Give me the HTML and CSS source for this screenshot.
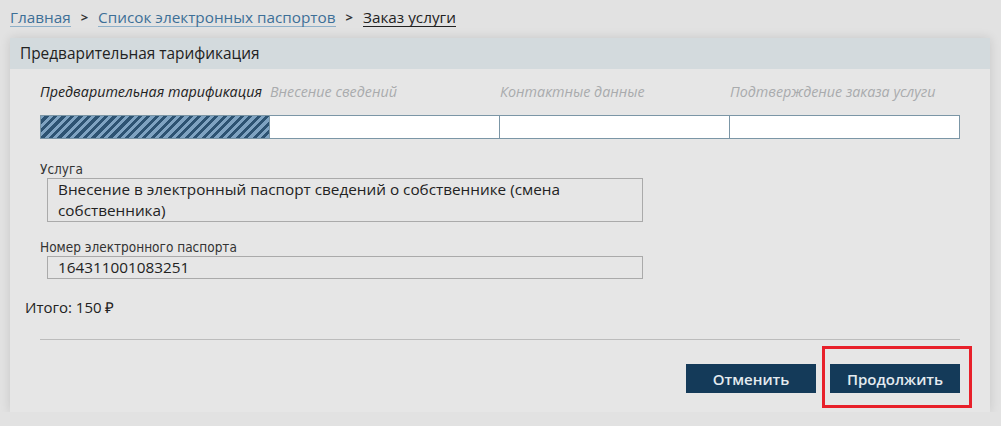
FILE: index.html
```html
<!DOCTYPE html>
<html>
    <head>
        <meta charset="UTF-8">
        <title>Заказ услуги</title>
        <link rel="stylesheet" href="styles.css">
    </head>
    <body>
        <nav class="crumbs">
            <a href="#" class="crumb-link">Главная</a>
            <span class="crumb-sep">&gt;</span>
            <a href="#" class="crumb-link">Список электронных паспортов</a>
            <span class="crumb-sep">&gt;</span>
            <span class="crumb-current">Заказ услуги</span>
        </nav>
        <div class="card">
            <div class="card-head">Предварительная тарификация</div>
            <div class="card-body">
                <div class="steps">
                    <div class="step step-active">
                        <div class="step-name">Предварительная тарификация</div>
                        <div class="step-bar"></div>
                    </div>
                    <div class="step">
                        <div class="step-name">Внесение сведений</div>
                        <div class="step-bar"></div>
                    </div>
                    <div class="step">
                        <div class="step-name">Контактные данные</div>
                        <div class="step-bar"></div>
                    </div>
                    <div class="step">
                        <div class="step-name">Подтверждение заказа услуги</div>
                        <div class="step-bar"></div>
                    </div>
                </div>
                <div class="field">
                    <div class="field-label">Услуга</div>
                    <div class="field-value">Внесение в электронный паспорт сведений о собственнике (смена собственника)</div>
                </div>
                <div class="field">
                    <div class="field-label">Номер электронного паспорта</div>
                    <div class="field-value">164311001083251</div>
                </div>
                <div class="total">Итого: 150 ₽</div>
                <div class="actions">
                    <button class="btn">Отменить</button>
                    <span class="btn-mark"><button class="btn">Продолжить</button></span>
                </div>
            </div>
        </div>
    </body>
</html>
```

FILE: styles.css
```css
body {
    margin: 0;
    background-color: #e2e2e2;
    font-family: 'Open Sans', sans-serif;
    color: #222;
}
.crumbs {
    height: 38px;
    padding: 0 10px;
    display: flex;
    align-items: center;
    font-size: 15.3px;
    box-sizing: border-box;
    padding-bottom: 4px;
}
.crumb-link {
    color: #3d6f97;
    text-decoration: none;
    border-bottom: 1px solid #8fb0c8;
    line-height: 18px;
}
.crumb-sep {
    margin: 0 10px;
    font-size: 13px;
    font-weight: 700;
    color: #333;
}
.crumb-current {
    color: #222;
    border-bottom: 1px solid #222;
    line-height: 18px;
}
.card {
    margin: 0 11px 0 10px;
    background-color: #e6e6e6;
    box-shadow: 0 0 10px rgba(0, 0, 0, 0.12);
}
.card-head {
    height: 31px;
    background-color: #d3dadd;
    padding-left: 10px;
    display: flex;
    align-items: center;
    font-size: 15.4px;
    color: #222;
}
.card-body {
    padding: 12px 30px 19px 30px;
}
.steps {
    display: flex;
}
.step {
    width: 25%;
}
.step-name {
    font-size: 14.3px;
    font-style: italic;
    color: #a9abad;
    height: 24px;
    padding-top: 1px;
    box-sizing: border-box;
    white-space: nowrap;
}
.step-active .step-name {
    color: #222;
}
.step-bar {
    height: 24px;
    margin-top: 10px;
    background-color: #fff;
    border: 1px solid #7b96a6;
    box-sizing: border-box;
}
.step + .step .step-bar {
    border-left: none;
}
.step-active .step-bar {
    background: repeating-linear-gradient(-45deg, #7fa3c1 0, #7fa3c1 3px, #2d5372 3px, #2d5372 6px);
}
.field {
    margin-top: 21px;
}
.field + .field {
    margin-top: 16px;
}
.field-label {
    font-family: 'DejaVu Sans Condensed', 'DejaVu Sans', sans-serif;
    font-stretch: condensed;
    font-size: 13.5px;
    color: #333;
    line-height: 18px;
}
.field-value {
    margin-left: 7px;
    width: 596px;
    box-sizing: border-box;
    border: 1px solid #aaa;
    padding: 0 10px;
    font-size: 15.3px;
    line-height: 21px;
}
.total {
    margin: 17px 0 0 -15px;
    font-size: 15px;
    line-height: 22px;
}
.actions {
    margin-top: 21px;
    border-top: 1px solid #bcbcbc;
    padding-top: 24px;
    display: flex;
    justify-content: flex-end;
    gap: 14px;
}
.btn {
    width: 130px;
    height: 29px;
    border: none;
    background-color: #143a59;
    color: #e4ebf0;
    font-family: 'Open Sans', sans-serif;
    font-size: 15px;
    font-weight: 600;
    cursor: pointer;
}
.btn-mark {
    display: flex;
    position: relative;
}
.btn-mark::after {
    content: "";
    position: absolute;
    left: -8px;
    right: -12px;
    top: -18px;
    bottom: -15px;
    border: 3px solid #e8202a;
}
```
